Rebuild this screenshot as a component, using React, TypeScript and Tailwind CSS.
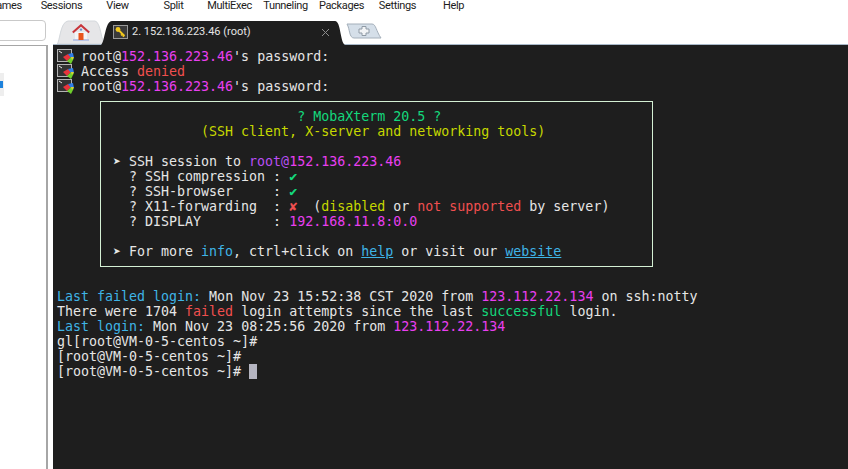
const cyan = "text-[#3fb4e6]";
const pink = "text-[#e93ff0]";
const purple = "text-[#b94ff5]";
const red = "text-[#f04f4f]";
const green = "text-[#14d97c]";
const yellow = "text-[#c6d800]";
const line = "h-[15px] leading-[15px] whitespace-pre";

const menu = ["Games", "Sessions", "View", "Split", "MultiExec", "Tunneling", "Packages", "Settings", "Help"];

function PromptIcon() {
  return (
    <svg width="24" height="16" viewBox="0 0 24 16" className="shrink-0">
      <rect x="0.5" y="0.5" width="14" height="12" fill="#333333" stroke="#b4b4b4" />
      <path d="M2 2l3 2" stroke="#e8e8e8" fill="none" />
      <path d="M6 8l5-3 3 3-4 4z" fill="#e8343c" />
      <path d="M11 5l5-1 1 5-3 0z" fill="#2f7de8" />
      <path d="M10 12l4-4 3 1-3 6z" fill="#6fd02c" />
      <path d="M14 8l3 0-2 3z" fill="#e8d030" />
    </svg>
  );
}

function HomeIcon() {
  return (
    <svg width="18" height="17" viewBox="0 0 18 17">
      <path d="M3 8h12v7H3z" fill="#f4f4f6" />
      <path d="M1 15h16v2H1z" fill="#b9c4e4" />
      <path d="M0.8 8.600L9 1.200l8.200 7.400" fill="none" stroke="#c8343a" strokeWidth="2" />
      <path d="M6.500 9h5v7h-5z" fill="#e8541c" />
      <circle cx="9" cy="5.600" r="1.200" fill="#6a90c8" />
    </svg>
  );
}

function KeyIcon() {
  return (
    <svg width="15" height="14" viewBox="0 0 15 14" className="shrink-0">
      <rect x="0.5" y="0.5" width="14" height="13" fill="#3a3a3a" stroke="#9a9a9a" />
      <circle cx="5" cy="4.500" r="2.400" fill="#f2c81e" />
      <path d="M6 5.500l5.500 5.500M9.500 9l-1.400 1.400M11 10.500l-1.200 1.200" stroke="#f2c81e" strokeWidth="1.800" fill="none" />
    </svg>
  );
}

export default function App() {
  return (
    <div className="w-[848px] h-[469px] overflow-hidden bg-white flex flex-col font-['Roboto',sans-serif]">
      <nav className="h-5 shrink-0 flex -ml-[22.5px] text-[11px] tracking-[-0.35px] leading-[12px] text-[#1c1c1c]">
        {menu.map(m => (
          <div key={m} className="w-[56px] text-center whitespace-nowrap">{m}</div>
        ))}
      </nav>

      <div className="flex-1 flex min-h-0">
        <aside className="w-[53px] shrink-0 flex flex-col">
          <div className="h-[21px] w-[50px] -ml-[4px] shrink-0 border border-[#c9c9c9] rounded-[4px] bg-white" />
          <div className="mt-1 w-[48px] flex-1 border-t border-r-2 border-[#a6a6a6] pt-[27px]">
            <div className="w-1 h-[23px] bg-[#eeeeee] flex items-center">
              <div className="w-[3px] h-[7px] bg-[#1e82dc]" />
            </div>
          </div>
        </aside>

        <main className="flex-1 flex flex-col min-w-0">
          <div className="h-[25px] shrink-0 flex border-b border-[#a9b9c9] items-end">
            <div className="relative ml-[4px] w-[48px] h-[24px] flex items-center justify-center shrink-0">
              <svg width="48" height="24" viewBox="0 0 48 24" className="absolute inset-0">
                <path d="M0 24C3 22 3 2 11 1L38 1C44 2 44 22 48 24Z" fill="#e6e6e8" stroke="#d4d8dc" />
              </svg>
              <span className="relative"><HomeIcon /></span>
            </div>
            <div className="relative -ml-[4px] w-[244px] h-[25px] -mb-px shrink-0 flex items-center pl-[12px] pb-[1px] text-[11px] text-[#e4e4e4]">
              <svg width="244" height="25" viewBox="0 0 244 25" className="absolute inset-0">
                <path d="M0 25C4 22 4 1 11 1L234 1C240 1 239 22 244 25Z" fill="#1e1e1e" />
              </svg>
              <span className="relative"><KeyIcon /></span>
              <span className="relative ml-[4px] whitespace-nowrap">2. 152.136.223.46 (root)</span>
              <svg width="9" height="9" viewBox="0 0 9 9" className="absolute left-[220px] top-[8px]">
                <path d="M1 1l7 7M8 1l-7 7" stroke="#8c8c8c" strokeWidth="1" />
              </svg>
            </div>
            <svg width="36" height="16" viewBox="0 0 36 16" className="shrink-0 mb-[5px] ml-[1px]">
              <path d="M1 1H26C30 1 30 8 35 15H8C3 15 4 6 1 1Z" fill="#d5dfe9" stroke="#a4afba" />
              <path d="M13 6h3V3.500h4V6h3v4h-3v2.500h-4V10h-3z" fill="#f2f4f6" stroke="#8f9aa5" />
            </svg>
          </div>

          <div className="flex-1 bg-[#1e1e1e] pt-1 pl-1 font-['DejaVu_Sans_Mono',monospace] text-[13.3px] text-[#e6e6e6]">
            <div className={line + " flex"}><PromptIcon /><span>root@<span className={pink}>152.136.223.46</span>'s password:</span></div>
            <div className={line + " flex"}><PromptIcon /><span>Access <span className={red}>denied</span></span></div>
            <div className={line + " flex"}><PromptIcon /><span>root@<span className={pink}>152.136.223.46</span>'s password:</span></div>

            <div className="mt-[7px] ml-[43px] w-[553px] border border-[#d4f0d4] pl-[12px] py-[7px]">
              <div className={line}>{"                       "}<span className={green}>? MobaXterm 20.5 ?</span></div>
              <div className={line + " " + yellow}>{"           (SSH client, X-server and networking tools)"}</div>
              <div className={line} />
              <div className={line}>➤ SSH session to <span className={purple}>root@</span><span className={pink}>152.136.223.46</span></div>
              <div className={line}>{"  ? SSH compression : "}<span className={green}>✔</span></div>
              <div className={line}>{"  ? SSH-browser     : "}<span className={green}>✔</span></div>
              <div className={line}>{"  ? X11-forwarding  : "}<span className={red}>✘</span>{"  ("}<span className={yellow}>disabled</span> or <span className={red}>not supported</span> by server)</div>
              <div className={line}>{"  ? DISPLAY         : "}<span className={pink}>192.168.11.8:0.0</span></div>
              <div className={line} />
              <div className={line}>➤ For more <span className={cyan}>info</span>, ctrl+click on <span className={cyan + " underline"}>help</span> or visit our <span className={cyan + " underline"}>website</span></div>
            </div>

            <div className="mt-[22px]">
              <div className={line}><span className={cyan}>Last failed login:</span> Mon Nov 23 15:52:38 CST 2020 from <span className={pink}>123.112.22.134</span> on ssh:notty</div>
              <div className={line}>There were 1704 <span className={red}>failed</span> login attempts since the last <span className={green}>successful</span> login.</div>
              <div className={line}><span className={cyan}>Last login:</span> Mon Nov 23 08:25:56 2020 from <span className={pink}>123.112.22.134</span></div>
              <div className={line}>gl[root@VM-0-5-centos ~]#</div>
              <div className={line}>[root@VM-0-5-centos ~]#</div>
              <div className={line + " flex"}>[root@VM-0-5-centos ~]# <span className="w-2 h-[15px] bg-[#b4b4c0]" /></div>
            </div>
          </div>
        </main>
      </div>
    </div>
  );
}
